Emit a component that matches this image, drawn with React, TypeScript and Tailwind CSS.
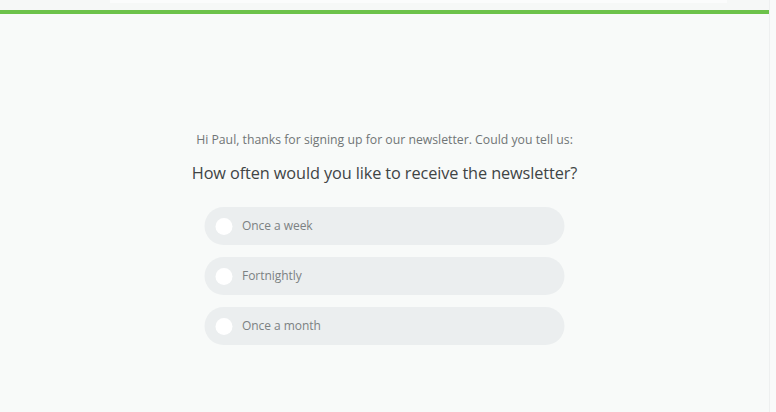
import React from 'react';

const options = ['Once a week', 'Fortnightly', 'Once a month'];

const App: React.FC = () => {
  return (
    <div
      className="h-[412px] w-[776px] flex bg-[#f8faf9] overflow-hidden"
      style={{ fontFamily: '"Open Sans", "Noto Sans", sans-serif' }}
    >
      <div className="flex-1 flex flex-col">
        <div className="h-[10px] bg-[#f6f8f7] pl-[110px]">
          <div className="h-[3px] w-[617px] bg-[#fbfcfc]" />
        </div>
        <div className="h-[4px] bg-[#6cc24a]" />

        <div className="flex flex-col items-center pt-[118px]">
          <p className="text-[12.25px] text-[#707576] leading-[16px]">
            Hi Paul, thanks for signing up for our newsletter. Could you tell us:
          </p>
          <h1 className="mt-[14px] text-[16.3px] text-[#3f4445] leading-[22px] tracking-[-0.1px]">
            How often would you like to receive the newsletter?
          </h1>

          <div className="mt-[23px] flex flex-col gap-[12px] w-[360px] -translate-x-[0.5px]">
            {options.map((label) => (
              <label
                key={label}
                className="h-[38px] rounded-full bg-[#ebeeef] flex items-center pl-[11px] cursor-pointer"
              >
                <span className="w-[17px] h-[17px] rounded-full bg-white shrink-0" />
                <span className="ml-[10px] text-[12px] text-[#7b8182] tracking-[-0.05px]">
                  {label}
                </span>
              </label>
            ))}
          </div>
        </div>
      </div>
      <div className="w-[7px] bg-[#f9fafa] border-l border-[#eef0f0]" />
    </div>
  );
};

export default App;
